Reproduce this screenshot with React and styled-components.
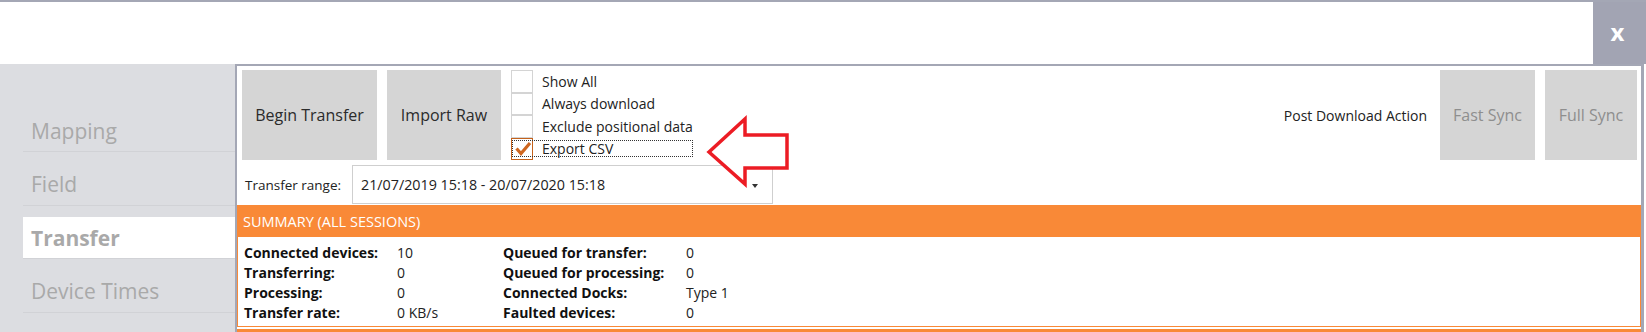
import React from "react";
import styled, { createGlobalStyle } from "styled-components";

const GlobalStyle = createGlobalStyle`
  html, body {
    margin: 0;
    padding: 0;
    background: #fff;
  }
  body {
    font-family: "Open Sans", "Noto Sans", sans-serif;
    color: #222;
  }
  * {
    box-sizing: border-box;
  }
`;

const Window = styled.div`
  position: relative;
  width: 1646px;
  height: 332px;
  display: flex;
  flex-direction: column;
  border-top: 2px solid #a4a7b5;
  background: #fff;
  overflow: hidden;
`;

const Header = styled.div`
  height: 62px;
  flex-shrink: 0;
  display: flex;
  justify-content: flex-end;
`;

const CloseButton = styled.div`
  width: 53px;
  height: 100%;
  background: #a2a4b3;
  color: #fff;
  font-size: 24px;
  font-weight: 700;
  display: flex;
  align-items: center;
  justify-content: center;
  padding-bottom: 4px;
  padding-right: 4px;
`;

const Body = styled.div`
  flex: 1;
  display: flex;
  min-height: 0;
`;

const Sidebar = styled.nav`
  width: 235px;
  flex-shrink: 0;
  background: #dcdde1;
  padding: 46px 0 0 23px;
`;

const NavItem = styled.div`
  height: 42px;
  margin-bottom: 11.5px;
  padding-left: 8px;
  display: flex;
  align-items: center;
  font-size: 21px;
  color: #a9a9a9;
  border-bottom: 1px solid #d1d2d6;
  background: ${(p) => (p.active ? "#fff" : "transparent")};
  font-weight: ${(p) => (p.active ? 700 : 400)};
`;

const Panel = styled.div`
  flex: 1;
  margin-right: 2px;
  border-top: 2px solid #a4a7b5;
  border-left: 2px solid #a4a7b5;
  border-right: 3px solid #a4a7b5;
  background: #fff;
  display: flex;
  flex-direction: column;
  overflow: hidden;
`;

const TopRow = styled.div`
  display: flex;
  align-items: center;
  flex-shrink: 0;
  height: 94px;
  padding: 4px 4px 0 5px;
`;

const ActionButton = styled.div`
  width: ${(p) => p.w}px;
  height: 90px;
  margin-right: 10px;
  background: #d5d5d5;
  display: flex;
  align-items: center;
  justify-content: center;
  font-size: 16px;
  color: ${(p) => (p.disabled ? "#8e8e8e" : "#2b2b2b")};
  &:last-child {
    margin-right: 0;
  }
`;

const CheckGroup = styled.div`
  display: grid;
  grid-template-rows: repeat(4, 1fr);
  height: 90px;
  width: 180px;
`;

const CheckRow = styled.div`
  position: relative;
  display: flex;
  align-items: center;
  white-space: nowrap;
  font-size: 14px;
  color: #222;
  &::after {
    content: "";
    display: ${(p) => (p.focused ? "block" : "none")};
    position: absolute;
    top: 2px;
    bottom: 3px;
    left: 1px;
    right: 0;
    border: 1px dotted #333;
  }
`;

const Box = styled.div`
  width: 22px;
  height: 100%;
  flex-shrink: 0;
  margin-right: 9px;
  border: 1px solid ${(p) => (p.checked ? "#c4621c" : "#d4d4d4")};
  display: flex;
  align-items: center;
  justify-content: center;
`;

const Spacer = styled.div`
  flex: 1;
`;

const PostLabel = styled.div`
  font-size: 14px;
  color: #222;
  margin-right: 13px;
`;

const RangeRow = styled.div`
  display: flex;
  align-items: center;
  flex-shrink: 0;
  margin-top: 5px;
  padding-left: 8px;
`;

const RangeLabel = styled.div`
  font-size: 13.5px;
  width: 107px;
  color: #222;
`;

const Dropdown = styled.div`
  width: 421px;
  height: 39px;
  border: 1px solid #cfcfcf;
  display: flex;
  align-items: center;
  padding: 0 14px 0 8px;
  font-size: 14.3px;
  color: #222;
`;

const DropText = styled.span`
  flex: 1;
`;

const Caret = styled.span`
  width: 0;
  height: 0;
  border-left: 3.5px solid transparent;
  border-right: 3.5px solid transparent;
  border-top: 4.5px solid #333;
  margin-top: 2px;
`;

const Summary = styled.section`
  margin-top: 1px;
  flex-shrink: 0;
`;

const SummaryHeader = styled.div`
  height: 32px;
  background: #f98937;
  color: #fff;
  font-size: 14.5px;
  display: flex;
  align-items: center;
  padding-left: 6px;
`;

const SummaryBody = styled.div`
  height: 90px;
  border: 1px solid #f98937;
  border-top: none;
  display: grid;
  grid-template-columns: 153px 106px 183px 1fr;
  grid-auto-rows: 20px;
  align-items: center;
  padding: 6px 0 0 6px;
  font-size: 14px;
  line-height: 20px;
  color: #111;
`;

const Key = styled.div`
  font-weight: 700;
`;

const Value = styled.div`
  color: #222;
`;

const NextHeader = styled.div`
  height: 20px;
  flex-shrink: 0;
  margin-top: 2px;
  background: #f98937;
`;

const Callout = styled.svg`
  position: absolute;
  left: 700px;
  top: 112px;
`;

const checks = [
  { label: "Show All" },
  { label: "Always download" },
  { label: "Exclude positional data" },
  { label: "Export CSV", checked: true, focused: true },
];

const stats = [
  ["Connected devices:", "10", "Queued for transfer:", "0"],
  ["Transferring:", "0", "Queued for processing:", "0"],
  ["Processing:", "0", "Connected Docks:", "Type 1"],
  ["Transfer rate:", "0 KB/s", "Faulted devices:", "0"],
];

export default function App() {
  return (
    <Window>
      <GlobalStyle />
      <Header>
        <CloseButton>x</CloseButton>
      </Header>
      <Body>
        <Sidebar>
          <NavItem>Mapping</NavItem>
          <NavItem>Field</NavItem>
          <NavItem active>Transfer</NavItem>
          <NavItem>Device Times</NavItem>
        </Sidebar>
        <Panel>
          <TopRow>
            <ActionButton w={135}>Begin Transfer</ActionButton>
            <ActionButton w={114}>Import Raw</ActionButton>
            <CheckGroup>
              {checks.map((c) => (
                <CheckRow key={c.label} focused={c.focused}>
                  <Box checked={c.checked}>
                    {c.checked && (
                      <svg width="20" height="20" viewBox="0 0 20 20">
                        <path
                          d="M4.5 9.5 L9 14.5 L18 4"
                          fill="none"
                          stroke="#cf661f"
                          strokeWidth="3.2"
                        />
                      </svg>
                    )}
                  </Box>
                  {c.label}
                </CheckRow>
              ))}
            </CheckGroup>
            <Spacer />
            <PostLabel>Post Download Action</PostLabel>
            <ActionButton w={95} disabled>
              Fast Sync
            </ActionButton>
            <ActionButton w={92} disabled>
              Full Sync
            </ActionButton>
          </TopRow>
          <RangeRow>
            <RangeLabel>Transfer range:</RangeLabel>
            <Dropdown>
              <DropText>21/07/2019 15:18 - 20/07/2020 15:18</DropText>
              <Caret />
            </Dropdown>
          </RangeRow>
          <Summary>
            <SummaryHeader>SUMMARY (ALL SESSIONS)</SummaryHeader>
            <SummaryBody>
              {stats.map((row) => (
                <React.Fragment key={row[0]}>
                  <Key>{row[0]}</Key>
                  <Value>{row[1]}</Value>
                  <Key>{row[2]}</Key>
                  <Value>{row[3]}</Value>
                </React.Fragment>
              ))}
            </SummaryBody>
          </Summary>
          <NextHeader />
        </Panel>
      </Body>
      <Callout width="92" height="76" viewBox="0 0 92 76">
        <polygon
          points="9,38 45,5 45,21 87,21 87,54 45,54 45,70"
          fill="#fff"
          stroke="#ec1c24"
          strokeWidth="3.5"
        />
      </Callout>
    </Window>
  );
}
